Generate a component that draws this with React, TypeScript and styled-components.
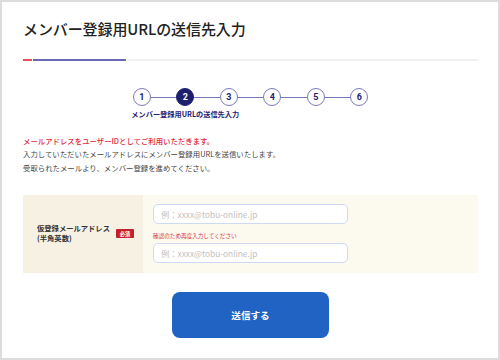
import React from "react";
import styled, { createGlobalStyle } from "styled-components";

const GlobalStyle = createGlobalStyle`
  html, body {
    margin: 0;
    padding: 0;
    background: #ffffff;
  }
  body {
    font-family: "Noto Sans CJK JP", "Noto Sans", sans-serif;
    color: #333333;
  }
  * {
    box-sizing: border-box;
  }
`;

const Frame = styled.div`
  width: 500px;
  height: 360px;
  border: 2px solid #dcdcdc;
  padding: 0 20px 0 21px;
  display: flex;
  flex-direction: column;
  overflow: hidden;
`;

const Title = styled.h1`
  margin: 17px 0 0;
  font-size: 15px;
  line-height: 20px;
  font-weight: 500;
  color: #222222;
  letter-spacing: -0.1px;
`;

const TitleRule = styled.div`
  display: flex;
  gap: 1px;
  height: 2px;
  margin-top: 20px;
`;

const RuleSegment = styled.span<{ color: string; w?: number }>`
  display: block;
  height: 2px;
  background: ${p => p.color};
  width: ${p => (p.w ? `${p.w}px` : "auto")};
  flex: ${p => (p.w ? "none" : "1")};
`;

const Stepper = styled.ol`
  list-style: none;
  margin: 27px 0 0;
  padding: 0;
  display: flex;
  justify-content: center;
  align-items: center;
`;

const Step = styled.li`
  position: relative;
  display: flex;
  align-items: center;
`;

const Connector = styled.span`
  display: block;
  width: 25.5px;
  height: 1px;
  background: #7676b6;
`;

const Circle = styled.span<{ active?: boolean }>`
  width: 18px;
  height: 18px;
  border-radius: 50%;
  border: 1.5px solid ${p => (p.active ? "#1e206f" : "#7a7aba")};
  background: ${p => (p.active ? "#1e206f" : "#ffffff")};
  color: ${p => (p.active ? "#ffffff" : "#1e206f")};
  font-family: "Roboto", "Noto Sans", sans-serif;
  font-size: 9px;
  font-weight: 700;
  display: flex;
  align-items: center;
  justify-content: center;
  line-height: 1;
`;

const StepLabel = styled.span`
  position: absolute;
  top: 22px;
  left: 9px;
  transform: translateX(-50%);
  white-space: nowrap;
  font-size: 7.2px;
  font-weight: 700;
  color: #1e206f;
  line-height: 9px;
`;

const Messages = styled.div`
  margin-top: 28px;
  font-size: 7.4px;
  line-height: 13.3px;
  color: #444444;
`;

const Line = styled.p<{ alert?: boolean }>`
  margin: 0;
  color: ${p => (p.alert ? "#e4283d" : "#444444")};
  font-weight: ${p => (p.alert ? 500 : 400)};
`;

const FormTable = styled.div`
  margin-top: 21px;
  display: flex;
  height: 78px;
`;

const LabelCell = styled.div`
  width: 120px;
  flex: none;
  background: #f6f1e3;
  display: flex;
  align-items: center;
  justify-content: space-between;
  padding: 0 9px 0 14px;
`;

const LabelText = styled.div`
  font-size: 7.3px;
  line-height: 9.5px;
  font-weight: 700;
  color: #333333;
`;

const Badge = styled.span`
  width: 18px;
  height: 9px;
  background: #c41f2e;
  color: #ffffff;
  font-size: 5.2px;
  font-weight: 700;
  display: flex;
  align-items: center;
  justify-content: center;
  border-radius: 1px;
`;

const InputCell = styled.div`
  flex: 1;
  background: #fcf9ef;
  padding: 9px 10px 10px;
  display: flex;
  flex-direction: column;
`;

const EmailInput = styled.input`
  width: 195px;
  height: 20px;
  border: 1px solid #cddaf1;
  border-radius: 5px;
  background: #ffffff;
  padding: 0 7px;
  font-family: "Noto Sans CJK JP", "Noto Sans", sans-serif;
  font-size: 8.3px;
  outline: none;

  &::placeholder {
    color: #c2c2c2;
  }
`;

const Note = styled.p`
  margin: 8px 0 2px;
  font-size: 5.6px;
  line-height: 9px;
  color: #d4374a;
`;

const SubmitButton = styled.button`
  margin: 19px auto 0;
  width: 157px;
  height: 46px;
  border: none;
  border-radius: 8px;
  background: #2163c3;
  color: #ffffff;
  font-family: "Noto Sans CJK JP", "Noto Sans", sans-serif;
  font-size: 9.6px;
  font-weight: 700;
  cursor: pointer;
`;

const steps = [1, 2, 3, 4, 5, 6];
const activeStep = 2;

export default function App() {
  return (
    <>
      <GlobalStyle />
      <Frame>
        <Title>メンバー登録用URLの送信先入力</Title>
        <TitleRule>
          <RuleSegment color="#e8505b" w={9} />
          <RuleSegment color="#6a6ab4" w={93} />
          <RuleSegment color="#f1f1f1" />
        </TitleRule>

        <Stepper>
          {steps.map((n, i) => (
            <React.Fragment key={n}>
              {i > 0 && <Connector />}
              <Step>
                <Circle active={n === activeStep}>{n}</Circle>
                {n === activeStep && (
                  <StepLabel>メンバー登録用URLの送信先入力</StepLabel>
                )}
              </Step>
            </React.Fragment>
          ))}
        </Stepper>

        <Messages>
          <Line alert>メールアドレスをユーザーIDとしてご利用いただきます。</Line>
          <Line>入力していただいたメールアドレスにメンバー登録用URLを送信いたします。</Line>
          <Line>受取られたメールより、メンバー登録を進めてください。</Line>
        </Messages>

        <FormTable>
          <LabelCell>
            <LabelText>
              仮登録メールアドレス
              <br />
              (半角英数)
            </LabelText>
            <Badge>必須</Badge>
          </LabelCell>
          <InputCell>
            <EmailInput type="email" placeholder="例：xxxx@tobu-online.jp" />
            <Note>確認のため再度入力してください</Note>
            <EmailInput type="email" placeholder="例：xxxx@tobu-online.jp" />
          </InputCell>
        </FormTable>

        <SubmitButton type="button">送信する</SubmitButton>
      </Frame>
    </>
  );
}
